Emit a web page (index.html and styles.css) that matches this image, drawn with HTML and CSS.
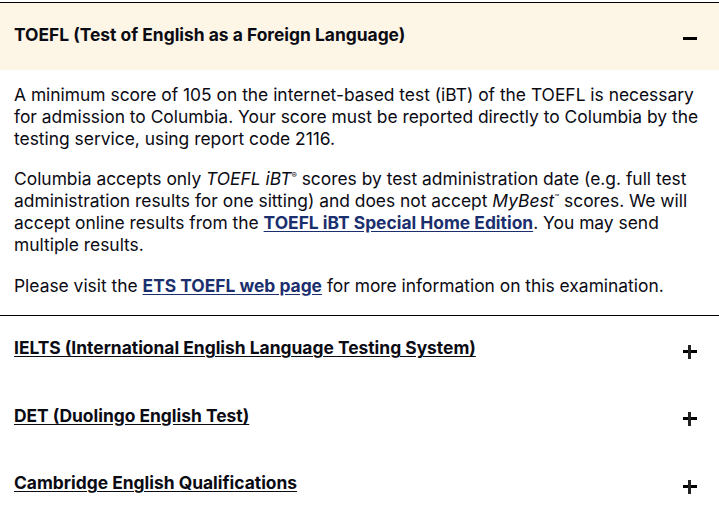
FILE: index.html
```html
<!DOCTYPE html>
<html lang="en">
<head>
    <meta charset="UTF-8">
    <meta name="viewport" content="width=device-width, initial-scale=1.0">
    <title>English Proficiency - Columbia</title>
    <link rel="stylesheet" href="styles.css">
</head>
<body>
    <div class="accordion">
        <div class="item open">
            <button class="item-head">
                <span class="item-title">TOEFL (Test of English as a Foreign Language)</span>
                <span class="toggle minus"></span>
            </button>
            <div class="item-body">
                <p>A minimum score of 105 on the internet-based test (iBT) of the TOEFL is necessary for admission to Columbia. Your score must be reported directly to Columbia by the testing service, using report code 2116.</p>
                <p>Columbia accepts only <em>TOEFL iBT</em><sup>&reg;</sup> scores by test administration date (e.g. full test administration results for one sitting) and does not accept <em>MyBest</em><sup>&trade;</sup> scores. We will accept online results from the <a href="#">TOEFL iBT Special Home Edition</a>. You may send multiple results.</p>
                <p>Please visit the <a href="#">ETS TOEFL web page</a> for more information on this examination.</p>
            </div>
        </div>

        <div class="item">
            <button class="item-head">
                <span class="item-title">IELTS (International English Language Testing System)</span>
                <span class="toggle plus"></span>
            </button>
        </div>

        <div class="item">
            <button class="item-head">
                <span class="item-title">DET (Duolingo English Test)</span>
                <span class="toggle plus"></span>
            </button>
        </div>

        <div class="item">
            <button class="item-head">
                <span class="item-title">Cambridge English Qualifications</span>
                <span class="toggle plus"></span>
            </button>
        </div>
    </div>
</body>
</html>
```

FILE: styles.css
```css
body {
    margin: 0;
    padding-top: 2px;
    background: white;
    font-family: Inter, "Liberation Sans", sans-serif;
    color: #0b0b14;
}
.accordion {
    border-top: 1px solid #000;
}
.item-head {
    display: flex;
    align-items: center;
    justify-content: space-between;
    width: 100%;
    padding: 21px 22px 24.5px 14px;
    border: none;
    background: none;
    font: inherit;
    color: inherit;
    text-align: left;
    cursor: pointer;
}
.item-title {
    font-size: 17.4px;
    font-weight: 700;
    line-height: 22px;
    text-decoration: underline;
    text-underline-offset: 2px;
}
.item.open {
    border-bottom: 1px solid #000;
}
.item.open .item-head {
    padding: 21px 22px 24px 14px;
    background-color: #fdf5e5;
}
.item.open .item-title {
    text-decoration: none;
}
.toggle {
    position: relative;
    width: 14px;
    height: 14px;
    margin-top: 7px;
    flex-shrink: 0;
}
.toggle::before,
.toggle::after {
    content: "";
    position: absolute;
    background: #000;
}
.toggle::before {
    left: 0;
    top: 5px;
    width: 14px;
    height: 3px;
}
.plus::after {
    left: 5px;
    top: 0;
    width: 3px;
    height: 14px;
    background: #222;
}
.item-body {
    padding: 14px 20px 19px 14px;
    font-size: 17.4px;
    line-height: 21.8px;
}
.item-body p {
    margin: 0 0 19px;
}
.item-body p:last-child {
    margin-bottom: 0;
}
.item-body sup {
    font-size: 8px;
    line-height: 0;
    vertical-align: 7px;
}
.item-body a {
    color: #1b2f6e;
    font-weight: 700;
    text-underline-offset: 2px;
}
```
